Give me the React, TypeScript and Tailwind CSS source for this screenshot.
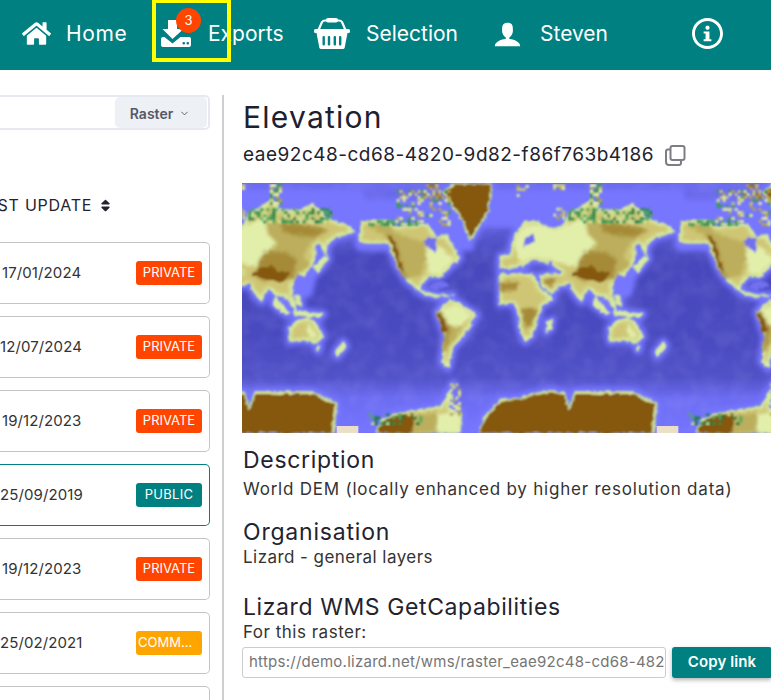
import React from "react";
import { ImUser, ImInfo } from "react-icons/im";
import { FaSort, FaHome } from "react-icons/fa";
import { FiChevronDown } from "react-icons/fi";

const FONT = "font-['Inter','Liberation_Sans',sans-serif]";

function ExportIcon() {
  return (
    <svg width="30" height="28" viewBox="0 0 30 28" fill="white">
      <path d="M7 1h9v9h6.500L11.500 20 1.500 10H7z" />
      <path d="M2 18h1.500l8 6.500 8-6.500H28q2 0 2 2v6q0 2-2 2H2q-2 0-2-2v-6q0-2 2-2z" />
      <rect x="21.500" y="23" width="2.500" height="2.500" rx="1" fill="#008080" />
      <rect x="25.500" y="23" width="2.500" height="2.500" rx="1" fill="#008080" />
    </svg>
  );
}

function BasketIcon() {
  return (
    <svg width="36" height="31" viewBox="0 0 36 31" fill="none">
      <path d="M4.500 12 L8 4 Q9 2.500 11 2.500 H25 Q27 2.500 28 4 L31.500 12" stroke="white" strokeWidth="2.200" />
      <rect x="12" y="0" width="12" height="4.500" rx="2" fill="white" />
      <rect x="0" y="11" width="36" height="4" rx="1.500" fill="white" />
      <path d="M2.500 15h31l-2.800 14.500q-.3 1.500-2 1.500H7.300q-1.700 0-2-1.500z" fill="white" />
      <g fill="#008080">
        <rect x="8.500" y="18" width="2.400" height="9.500" rx="1" />
        <rect x="13.800" y="18" width="2.400" height="9.500" rx="1" />
        <rect x="19.600" y="18" width="2.400" height="9.500" rx="1" />
        <rect x="25" y="18" width="2.400" height="9.500" rx="1" />
      </g>
    </svg>
  );
}

function CopyIcon() {
  return (
    <svg width="21" height="21" viewBox="0 0 21 21" fill="none" stroke="#7d7d86" strokeWidth="2">
      <rect x="5.500" y="1" width="14" height="14" rx="2" />
      <path d="M5 4.500H3q-2 0-2 2V17q0 3 3 3h10q2 0 2-2v-2" />
    </svg>
  );
}

/* Elevation map: one 960-unit wide tile, repeated across the picture. */
const LAND = [
  // Eurasia
  "M30 225 L40 175 L60 140 L75 125 L120 125 L130 140 L165 145 L195 130 L205 100 L255 75 L275 55 L300 90 L360 90 L400 70 L440 110 L470 125 L500 135 L525 155 L495 165 L470 170 L445 190 L437 225 L420 190 L405 200 L405 235 L395 260 L370 290 L350 280 L340 310 L335 330 L350 395 L335 380 L310 345 L290 350 L265 325 L245 365 L225 345 L208 310 L175 320 L155 345 L125 320 L120 285 L190 280 L150 250 L100 240 L75 255 L40 265 L0 265 L0 228 Z",
  // Africa
  "M0 285 L50 280 L100 285 L120 325 L160 355 L125 380 L110 425 L95 470 L75 485 L60 450 L55 400 L40 370 L0 372 Z",
  // Madagascar
  "M142 425 L158 420 L152 448 L138 456 Z",
  // Australia
  "M328 445 L345 425 L385 412 L405 425 L430 470 L412 490 L370 480 L330 485 Z",
  // Tasmania, New Zealand
  "M412 498 L420 500 L416 512 L410 510 Z",
  "M490 485 L498 498 L472 530 L466 518 Z",
  // Japan, Philippines
  "M400 262 L440 225 L445 235 L410 278 Z",
  "M345 345 L360 350 L362 380 L348 375 Z",
  // Indonesia
  "M285 352 L330 398 L320 406 L278 372 Z",
  "M340 392 L430 402 L420 412 L345 405 Z",
  // North America
  "M-415 125 L-340 120 L-310 140 L-270 135 L-220 130 L-190 170 L-160 165 L-120 235 L-180 290 L-210 290 L-235 310 L-240 330 L-190 345 L-140 345 L-190 352 L-235 340 L-280 300 L-305 265 L-335 190 L-390 190 L-425 188 Z",
  // South America
  "M-190 395 L-155 360 L-120 370 L-70 405 L-110 470 L-140 500 L-155 565 L-175 545 L-165 470 Z",
  // Greenland
  "M-170 35 L-140 10 L-25 10 L-35 95 L-90 185 L-115 120 L-155 60 Z",
  // Antarctica: main mass and peninsula side
  "M-60 759 L-50 715 L-20 680 L0 660 L50 655 L150 630 L195 640 L205 685 L225 635 L400 635 L470 670 L462 759 Z",
  "M-375 759 L-350 715 L-310 700 L-250 690 L-180 680 L-155 640 L-140 610 L-152 680 L-140 700 L-115 700 L-120 759 Z",
];

const PALE = [
  "M40 185 L75 135 L120 135 L165 150 L200 135 L255 110 L262 160 L290 190 L250 225 L232 262 L150 240 L100 232 L60 250 Z",
  "M-182 388 L-130 372 L-85 405 L-115 438 L-165 438 Z",
  "M-190 195 L-135 235 L-180 282 L-215 282 L-222 205 Z",
  "M385 430 L412 470 L395 478 L378 450 Z",
  "M-190 700 L-120 700 L-120 759 L-190 759 Z",
];

const OLIVE = [
  "M262 125 L330 122 L380 130 L450 150 L420 168 L390 190 L370 230 L392 250 L340 298 L250 308 L212 285 L232 260 L252 225 L290 190 L262 160 Z",
  "M-405 134 L-340 132 L-310 160 L-222 190 L-222 240 L-240 288 L-280 288 L-300 268 L-310 200 L-340 170 Z",
  "M-165 440 L-115 440 L-140 488 L-165 498 Z",
  "M-320 715 L-190 697 L-190 759 L-340 759 Z",
];

const DARK = [
  "M250 215 L320 215 L350 240 L340 290 L250 300 L225 275 Z",
  "M130 295 L170 292 L150 325 Z",
  "M62 385 L112 385 L95 440 L75 445 Z",
  "M0 305 L60 305 L50 330 L0 335 Z",
  "M300 130 L375 135 L445 152 L400 170 L340 165 L310 155 Z",
  "M-340 155 L-310 190 L-290 270 L-270 300 L-295 285 L-315 220 Z",
  "M-190 395 L-175 395 L-150 440 L-160 505 L-172 520 L-165 455 Z",
];

const BROWN = [
  "M215 285 L240 265 L270 255 L300 275 L330 280 L310 306 L260 300 Z",
  "M-340 160 L-315 190 L-302 240 L-285 280 L-305 262 L-320 210 Z",
  "M-188 395 L-172 410 L-158 450 L-172 460 Z",
  "M-165 35 L-137 13 L-28 13 L-38 92 L-90 178 L-112 118 L-150 60 Z",
  "M-58 759 L-48 720 L-18 685 L2 665 L50 660 L150 636 L192 645 L205 692 L228 642 L398 642 L463 675 L455 759 Z",
  "M-372 759 L-347 720 L-310 706 L-252 698 L-265 759 Z",
];

const LAKES = [
  "M75 175 L100 160 L105 185 L70 200 Z",
  "M-220 172 L-190 172 L-190 220 L-230 190 Z",
  "M-178 300 L-150 318 L-195 332 L-220 320 Z",
  "M148 240 L160 250 L155 270 L145 258 Z",
];

function hash(a: number, b: number) {
  const s = Math.sin(a * 12.9898 + b * 78.233) * 43758.5453;
  return s - Math.floor(s);
}

type Cell = { x: number; y: number; c: string };

function speckle(x0: number, y0: number, x1: number, y1: number, step: number, density: number, colors: string[]) {
  const out: Cell[] = [];
  for (let x = x0; x < x1; x += step) {
    for (let y = y0; y < y1; y += step) {
      if (hash(x, y) < density) {
        out.push({ x, y, c: colors[Math.floor(hash(y, x) * colors.length)] });
      }
    }
  }
  return out;
}

const PALES = ["#e6eeaa", "#c9c77a", "#d8e8a0", "#b3a552"];
const GREENS = ["#2e8f50", "#1f7a45", "#4fa860", "#cfe59a"];

const CELLS: Cell[] = [
  ...speckle(-310, 30, -150, 135, 9, 0.42, [...PALES, "#3a9a58"]),
  ...speckle(205, 85, 450, 125, 9, 0.55, GREENS),
  ...speckle(270, 12, 300, 70, 9, 0.6, [...PALES, "#3a9a58"]),
  ...speckle(50, 15, 85, 55, 9, 0.55, PALES),
  ...speckle(150, 12, 190, 22, 9, 0.7, PALES),
  ...speckle(160, 65, 195, 120, 9, 0.45, PALES),
  ...speckle(-230, 12, -180, 55, 9, 0.55, ["#b8a050", "#8f6a20", "#c9c77a"]),
  ...speckle(-395, 120, -260, 132, 9, 0.6, GREENS),
  ...speckle(-150, 610, -125, 700, 8, 0.5, PALES),
  ...speckle(-395, 700, -240, 730, 9, 0.3, GREENS),
];

function MapTile() {
  return (
    <g>
      <g filter="url(#halo)" fill="#7676ff" stroke="#7676ff" strokeWidth="26" strokeLinejoin="round">
        {LAND.map((d, i) => <path key={i} d={d} />)}
        <path d="M-420 70H-90V200H-420z" />
        <path d="M130 40H540V130H130z" />
        <path d="M-60 40H120V130H-60z" />
        <path d="M320 240L410 230L385 340L330 350z" />
      </g>
      <g filter="url(#rough)">
        <g fill="#d9eca4" stroke="#c8e89c" strokeWidth="3" strokeLinejoin="round">
          {LAND.map((d, i) => <path key={i} d={d} />)}
        </g>
        <g filter="url(#inset)" fill="#cfc674">
          {LAND.map((d, i) => <path key={i} d={d} />)}
        </g>
        <g filter="url(#mid)">
          <g fill="#e2efaa">{PALE.map((d, i) => <path key={i} d={d} />)}</g>
          <g fill="#bcae5c">{OLIVE.map((d, i) => <path key={i} d={d} />)}</g>
          <g fill="#a58b38">{DARK.map((d, i) => <path key={i} d={d} />)}</g>
        </g>
        <g fill="#85580f">{BROWN.map((d, i) => <path key={i} d={d} />)}</g>
        <g fill="#7070f0">{LAKES.map((d, i) => <path key={i} d={d} />)}</g>
      </g>
      <g filter="url(#soft)">
        {CELLS.map((r, i) => <rect key={i} x={r.x} y={r.y} width="9" height="9" fill={r.c} />)}
      </g>
      <rect x="470" y="738" width="65" height="21" fill="#ecdfc8" />
    </g>
  );
}

function WorldMap() {
  return (
    <svg className="block h-[250px] w-full" viewBox="-774 9 1587 750" preserveAspectRatio="none">
      <defs>
        <linearGradient id="sea" x1="0" y1="0" x2="0" y2="1">
          <stop offset="0" stopColor="#6c6cf0" />
          <stop offset="0.13" stopColor="#6464e2" />
          <stop offset="0.3" stopColor="#4848bc" />
          <stop offset="0.62" stopColor="#4a4ac0" />
          <stop offset="0.78" stopColor="#5252c8" />
          <stop offset="0.86" stopColor="#6c6cf2" />
          <stop offset="1" stopColor="#7474ff" />
        </linearGradient>
        <filter id="soft" x="0" y="0" width="1" height="1"><feGaussianBlur stdDeviation="2.500" /></filter>
        <filter id="halo"><feGaussianBlur stdDeviation="8" /></filter>
        <filter id="inset" x="-5%" y="-5%" width="110%" height="110%">
          <feMorphology operator="erode" radius="7" />
          <feGaussianBlur stdDeviation="5" />
        </filter>
        <filter id="mid" x="-5%" y="-5%" width="110%" height="110%"><feGaussianBlur stdDeviation="5" /></filter>
        <filter id="rough" x="-5%" y="-5%" width="110%" height="110%">
          <feTurbulence type="fractalNoise" baseFrequency="0.06" numOctaves="3" seed="4" result="n" />
          <feDisplacementMap in="SourceGraphic" in2="n" scale="14" xChannelSelector="R" yChannelSelector="G" />
          <feGaussianBlur stdDeviation="2.500" />
        </filter>
        <filter id="grain" x="0" y="0" width="1" height="1">
          <feTurbulence type="fractalNoise" baseFrequency="0.02" numOctaves="3" seed="9" />
          <feColorMatrix values="0 0 0 0 0.5  0 0 0 0 0.5  0 0 0 0 1  0.8 0 0 0 -0.3" />
          <feGaussianBlur stdDeviation="3" />
        </filter>
      </defs>
      <rect x="-774" y="9" width="1587" height="750" fill="url(#sea)" />
      <rect x="-774" y="9" width="1587" height="750" filter="url(#grain)" opacity="0.3" />
      {[-960, 0, 960].map((o) => (
        <g key={o} transform={`translate(${o} 0)`}>
          <MapTile />
        </g>
      ))}
    </svg>
  );
}

const ROWS = [
  { date: "17/01/2024", kind: "private", ml: "ml-[2px]" },
  { date: "12/07/2024", kind: "private", ml: "ml-0" },
  { date: "19/12/2023", kind: "private", ml: "ml-[2px]" },
  { date: "25/09/2019", kind: "public", ml: "ml-0" },
  { date: "19/12/2023", kind: "private", ml: "ml-[2px]" },
  { date: "25/02/2021", kind: "comm", ml: "ml-0" },
];

function Badge({ kind }: { kind: string }) {
  if (kind === "public")
    return <span className="flex h-6 w-[66px] items-center justify-center rounded-[3px] bg-[#008080] pb-[2px] text-[13px] leading-none tracking-[0.3px] text-white">PUBLIC</span>;
  if (kind === "comm")
    return <span className="flex h-6 w-[66px] items-center rounded-[3px] bg-[#ffa500] pb-[2px] pl-[2px] text-[13px] leading-none text-white">COMM...</span>;
  return <span className="flex h-6 w-[66px] items-center justify-center rounded-[3px] bg-[#ff4500] pb-[2px] text-[13px] leading-none text-white">PRIVATE</span>;
}

const NAV_TEXT = "text-[21px] leading-none text-white";

export default function App() {
  return (
    <div className={`${FONT} h-[700px] w-[771px] overflow-hidden bg-white text-[#23232f]`}>
      <header className="flex h-[70px] items-center bg-[#008080] pb-[4px] pl-[22px]">
        <div className="flex items-center gap-[15px]">
          <FaHome className="text-white" size={29} />
          <span className={`${NAV_TEXT} w-[61px] tracking-[0.6px]`}>Home</span>
        </div>
        <div className="relative ml-[34px] flex items-center gap-[17px]">
          <ExportIcon />
          <span className={`${NAV_TEXT} w-[76px]`}>Exports</span>
          <span className="absolute left-[15px] top-[-11px] flex h-[25px] w-[25px] items-center justify-center rounded-full bg-[#ff4500] text-[13px] leading-none text-white">3</span>
          <span className="absolute left-[-9px] top-[-20px] h-[63px] w-[79px] border-4 border-[#ffff00]" />
        </div>
        <div className="ml-[30px] flex items-center gap-[16px]">
          <BasketIcon />
          <span className={`${NAV_TEXT} w-[93px]`}>Selection</span>
        </div>
        <div className="ml-[34px] flex items-center gap-[18px]">
          <ImUser className="text-white" size={29} />
          <span className={`${NAV_TEXT} w-[68px]`}>Steven</span>
        </div>
        <ImInfo className="ml-[84px] text-white" size={31} />
      </header>

      <main className="flex h-[630px] pt-[25px]">
        <aside className="flex w-[224px] shrink-0 flex-col overflow-hidden border-r-2 border-[#cfcfcf] pr-[12px]">
          <div className="flex h-[38px] items-center justify-end rounded-r-[5px] border-2 border-l-0 border-[#e6e9f2] pr-[1px]">
            <div className="flex h-[31px] w-[92px] items-center justify-center gap-[6px] rounded-[5px] bg-[#edf0f5] pr-[2px] pt-[1px]">
              <span className="text-[14px] font-semibold text-[#555965]">Raster</span>
              <FiChevronDown className="text-[#555965]" size={11} />
            </div>
          </div>
          <div className="mt-[67px] flex h-[20px] items-center -ml-[24px] gap-[6px]">
            <span className="whitespace-nowrap text-[16px] leading-none tracking-[0.75px]">LAST UPDATE</span>
            <FaSort size={15} className="shrink-0" />
          </div>
          <div className="mt-[29px] flex flex-col gap-[12px]">
            {ROWS.map((r, i) => (
              <div
                key={i}
                className={`flex h-[62px] items-center justify-between rounded-r-[5px] border border-l-0 pr-[7px] ${
                  r.kind === "public" ? "border-[#008080]" : "border-[#c4c4c4]"
                }`}
              >
                <span className={`${r.ml} pt-[1px] text-[15px] tracking-[0.1px] text-[#333]`}>{r.date}</span>
                <Badge kind={r.kind} />
              </div>
            ))}
            <div className="h-[62px] rounded-r-[5px] border border-l-0 border-[#c4c4c4]" />
          </div>
        </aside>

        <section className="min-w-0 flex-1 overflow-hidden pl-[18px]">
          <h1 className="ml-[1px] text-[30px] font-normal leading-[44px] tracking-[1.25px] text-[#1d2030]">Elevation</h1>
          <div className="ml-[1px] mt-[2px] flex items-center gap-[11px]">
            <span className="whitespace-nowrap text-[19px] leading-[28px] tracking-[0.5px]">eae92c48-cd68-4820-9d82-f86f763b4186</span>
            <CopyIcon />
          </div>
          <div className="mt-[14px]">
            <WorldMap />
          </div>
          <h2 className="ml-[1px] mt-[12px] text-[23px] font-normal leading-[30px] tracking-[0.7px]">Description</h2>
          <p className="ml-[1px] whitespace-nowrap text-[17px] leading-[28px] tracking-[0.78px] text-[#333]">World DEM (locally enhanced by higher resolution data)</p>
          <h2 className="ml-[1px] mt-[14px] text-[23px] font-normal leading-[30px] tracking-[0.8px]">Organisation</h2>
          <p className="ml-[1px] -mt-[4px] text-[17px] leading-[28px] tracking-[0.45px] text-[#333]">Lizard - general layers</p>
          <h2 className="ml-[1px] mt-[21px] text-[23px] font-normal leading-[30px] tracking-[0.6px]">Lizard WMS GetCapabilities</h2>
          <p className="ml-[1px] text-[17px] leading-[20px] tracking-[0.5px] text-[#333]">For this raster:</p>
          <div className="mt-[5px] flex w-[540px] items-center gap-[6px]">
            <div className="flex h-[31px] w-[424px] shrink-0 items-center overflow-hidden rounded-[3px] border border-[#cccccc] pl-[6px]">
              <span className="whitespace-nowrap text-[15px] tracking-[0.25px] text-[#757575]">https://demo.lizard.net/wms/raster_eae92c48-cd68-482</span>
            </div>
            <div className="flex h-[31px] w-[100px] shrink-0 items-center justify-center rounded-[3px] bg-[#008080] text-[15px] font-semibold tracking-[0.1px] text-white shadow-[0_2px_4px_rgba(0,0,0,0.3)]">Copy link</div>
          </div>
        </section>
      </main>
    </div>
  );
}
